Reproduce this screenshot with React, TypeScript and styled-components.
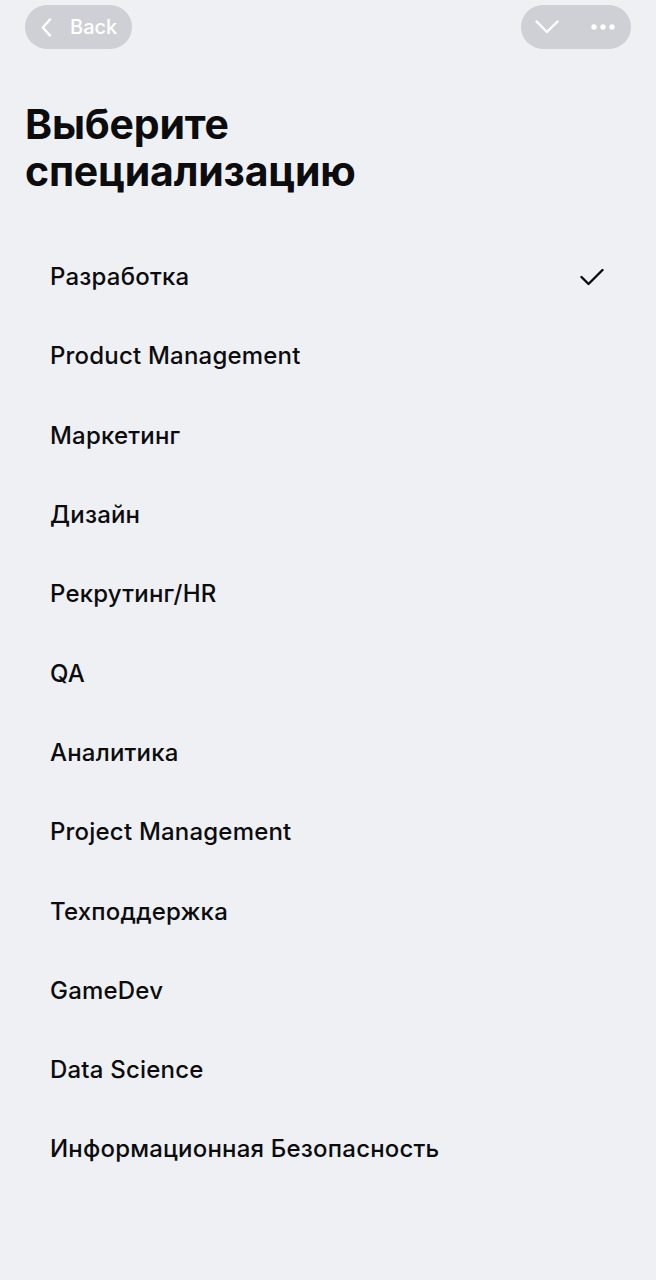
import React, { useState } from "react";
import styled, { createGlobalStyle } from "styled-components";

const GlobalStyle = createGlobalStyle`
  html, body {
    margin: 0;
    padding: 0;
    background: #eff0f3;
  }
  body {
    font-family: Inter, "Noto Sans", "Liberation Sans", sans-serif;
    -webkit-font-smoothing: antialiased;
  }
`;

const Page = styled.div`
  min-height: 1280px;
  background: #eff0f3;
  color: #0c0c0e;
`;

const TopBar = styled.div`
  display: flex;
  justify-content: space-between;
  align-items: center;
  padding: 5px 25px 0 25px;
`;

const Pill = styled.button`
  display: flex;
  align-items: center;
  height: 44px;
  border: none;
  border-radius: 22px;
  background: #cfd0d5;
  color: #ffffff;
  font-family: inherit;
  cursor: pointer;
`;

const BackPill = styled(Pill)`
  width: 107px;
  padding: 0 0 0 16px;
  gap: 18px;
  font-size: 20px;
  font-weight: 500;
`;

const MenuPill = styled(Pill)`
  width: 110px;
  padding: 0 16px 0 14px;
  justify-content: space-between;
`;

const Title = styled.h1`
  margin: 52px 0 0 25px;
  font-size: 41px;
  line-height: 47px;
  font-weight: 700;
  letter-spacing: -0.2px;
`;

const List = styled.ul`
  list-style: none;
  margin: 42px 0 0 0;
  padding: 0;
`;

const Item = styled.li`
  display: flex;
  align-items: center;
  justify-content: space-between;
  height: 79.3px;
  padding: 0 52px 0 50px;
  font-size: 24px;
  font-weight: 500;
  letter-spacing: 0.2px;
  cursor: pointer;
`;

const items = [
  "Разработка",
  "Product Management",
  "Маркетинг",
  "Дизайн",
  "Рекрутинг/HR",
  "QA",
  "Аналитика",
  "Project Management",
  "Техподдержка",
  "GameDev",
  "Data Science",
  "Информационная Безопасность",
];

const App = () => {
  const [selected, setSelected] = useState(0);

  return (
    <Page>
      <GlobalStyle />
      <TopBar>
        <BackPill>
          <svg width="11" height="19" viewBox="0 0 11 19" fill="none">
            <path
              d="M9 1.5L1.8 9.5L9 17.5"
              stroke="#fff"
              strokeWidth="2.4"
              strokeLinecap="round"
              strokeLinejoin="round"
            />
          </svg>
          Back
        </BackPill>
        <MenuPill>
          <svg width="24" height="14" viewBox="0 0 24 14" fill="none">
            <path
              d="M1.5 1.5L12 12L22.5 1.5"
              stroke="#fff"
              strokeWidth="2.4"
              strokeLinecap="round"
              strokeLinejoin="round"
            />
          </svg>
          <svg width="24" height="6" viewBox="0 0 24 6" fill="#fff">
            <circle cx="3" cy="3" r="2.7" />
            <circle cx="12" cy="3" r="2.7" />
            <circle cx="21" cy="3" r="2.7" />
          </svg>
        </MenuPill>
      </TopBar>

      <Title>
        Выберите
        <br />
        специализацию
      </Title>

      <List>
        {items.map((name, i) => (
          <Item key={name} onClick={() => setSelected(i)}>
            {name}
            {selected === i ? (
              <svg width="24" height="18" viewBox="0 0 24 18" fill="none">
                <path
                  d="M1.5 9L8.5 16L22.5 2"
                  stroke="#0c0c0e"
                  strokeWidth="2.4"
                  strokeLinecap="round"
                  strokeLinejoin="round"
                />
              </svg>
            ) : null}
          </Item>
        ))}
      </List>
    </Page>
  );
};

export default App;
